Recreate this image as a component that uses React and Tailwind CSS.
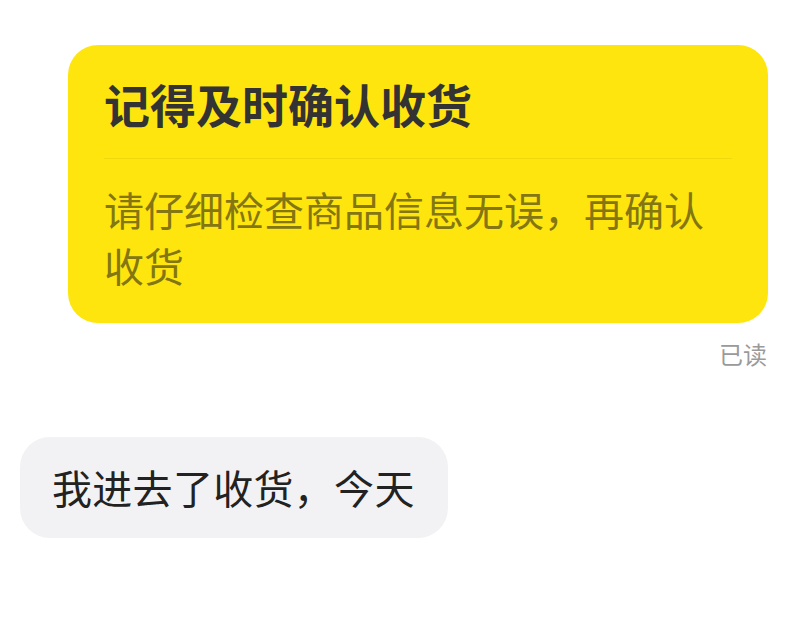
export default function App() {
  return (
    <div
      className="min-h-screen w-full bg-white"
      style={{ fontFamily: '"Noto Sans CJK SC", "Noto Sans", sans-serif' }}
    >
      <div className="flex flex-col pt-[45px]">
        {/* Card message (sent) */}
        <div className="flex justify-end pr-[18px]">
          <div className="w-[700px] rounded-[30px] bg-[#fee50e] px-[36px] pt-[26px] pb-[30px]">
            <h1 className="text-[46px] font-bold leading-[64px] text-[#333333]">
              记得及时确认收货
            </h1>
            <div className="mt-[23px] h-px bg-[#efd80c]" />
            <p className="mt-[22px] text-[40px] leading-[56px] text-[#837613]">
              请仔细检查商品信息无误，再确认收货
            </p>
          </div>
        </div>
        <div className="flex justify-end pr-[19px] pt-[16px]">
          <span className="text-[24px] leading-[30px] text-[#9a9a9a]">已读</span>
        </div>

        {/* Received message */}
        <div className="flex justify-start pl-[20px] pt-[68px]">
          <div className="rounded-[30px] bg-[#f2f2f4] pl-[32px] pr-[33px] py-[22px]">
            <p className="text-[40px] leading-[57px] tracking-[0.3px] text-[#222222]">
              我进去了收货，今天
            </p>
          </div>
        </div>
      </div>
    </div>
  );
}
